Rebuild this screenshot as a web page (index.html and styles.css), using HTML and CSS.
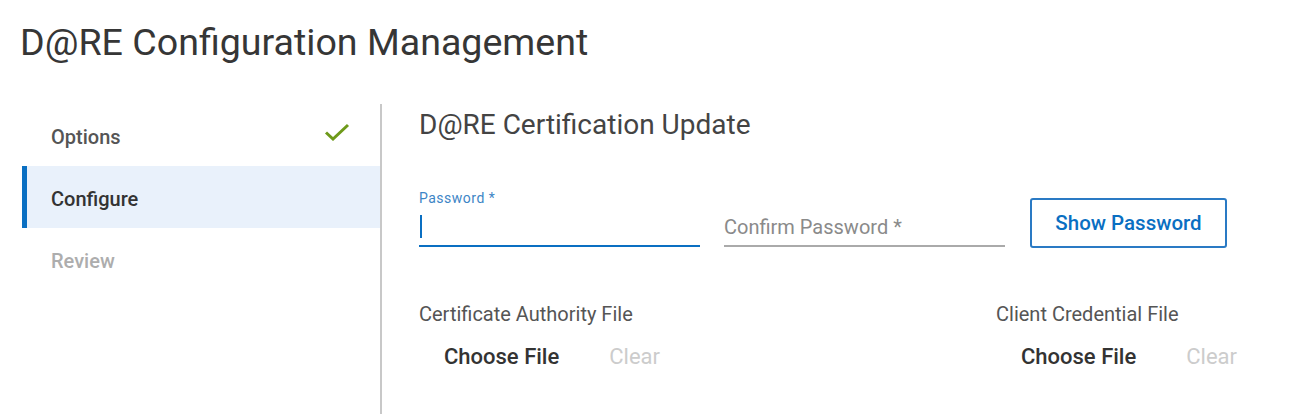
FILE: index.html
```html
<!DOCTYPE html>
<html lang="en">
<head>
<meta charset="utf-8">
<title>D@RE Configuration Management</title>
<link rel="stylesheet" href="styles.css">
</head>
<body>
  <h1 class="page-title">D@RE Configuration Management</h1>
  <div class="layout">
    <nav class="steps">
      <div class="step step-done">
        <span class="step-label">Options</span>
        <svg class="check" width="26" height="18" viewBox="0 0 26 18"><path d="M2 9.5 L9 16 L24 2" fill="none" stroke="#6e9a1a" stroke-width="3"/></svg>
      </div>
      <div class="step step-active"><span class="step-label">Configure</span></div>
      <div class="step step-disabled"><span class="step-label">Review</span></div>
    </nav>
    <main class="content">
      <h2 class="section-title">D@RE Certification Update</h2>
      <div class="pw-row">
        <div class="field field-focused">
          <label class="field-label">Password *</label>
          <div class="field-input"><span class="caret"></span></div>
        </div>
        <div class="field">
          <div class="field-input"><span class="placeholder">Confirm Password *</span></div>
        </div>
        <button class="btn-outline">Show Password</button>
      </div>
      <div class="files-row">
        <div class="file-group">
          <div class="file-label">Certificate Authority File</div>
          <div class="file-actions">
            <span class="choose">Choose File</span>
            <span class="clear">Clear</span>
          </div>
        </div>
        <div class="file-group">
          <div class="file-label">Client Credential File</div>
          <div class="file-actions">
            <span class="choose">Choose File</span>
            <span class="clear">Clear</span>
          </div>
        </div>
      </div>
    </main>
  </div>
</body>
</html>
```

FILE: styles.css
```css
html, body {
  margin: 0;
  padding: 0;
  background: #ffffff;
  font-family: Roboto, "Liberation Sans", sans-serif;
  height: 100%;
  overflow: hidden;
}

.page-title {
  margin: 0;
  padding: 19px 0 0 20px;
  height: 104px;
  box-sizing: border-box;
  font-size: 37.6px;
  font-weight: 400;
  color: #363636;
  line-height: 46px;
}

.layout {
  display: flex;
  height: 310px;
}

.steps {
  margin-left: 22px;
  width: 358px;
  border-right: 2px solid #c8c8c8;
}

.step {
  height: 62px;
  box-sizing: border-box;
  padding-top: 3px;
  display: flex;
  align-items: center;
  justify-content: space-between;
  border-left: 5px solid transparent;
  padding-left: 24px;
  padding-right: 30px;
  font-size: 20px;
  font-weight: 500;
  color: #555555;
}

.step-active {
  background: #e9f1fb;
  border-left-color: #0a6fc2;
  color: #333333;
}

.step-disabled {
  color: #adadad;
}

.check {
  display: block;
  margin-top: -10px;
}

.content {
  flex: 1;
  padding-left: 37px;
}

.section-title {
  margin: 0;
  padding-top: 4px;
  font-size: 28px;
  font-weight: 400;
  color: #444444;
  line-height: 34px;
}

.pw-row {
  display: flex;
  align-items: flex-end;
  margin-top: 48px;
}

.field {
  width: 281px;
  margin-right: 24px;
  margin-bottom: 1px;
}

.field-label {
  display: block;
  font-size: 14px;
  letter-spacing: 0.5px;
  color: #3d85c6;
  line-height: 16px;
  margin-bottom: 5px;
}

.field-input {
  height: 36px;
  box-sizing: border-box;
  border-bottom: 2px solid #aaaaaa;
  display: flex;
  align-items: flex-end;
  padding-bottom: 6px;
}

.field-focused .field-input {
  border-bottom-color: #0a6fc2;
}

.caret {
  width: 2px;
  height: 23px;
  background: #0a6fc2;
  margin-left: 1px;
  margin-bottom: 1px;
}

.placeholder {
  font-size: 20px;
  line-height: 24px;
  color: #8a8a8a;
}

.btn-outline {
  width: 197px;
  height: 50px;
  border: 2px solid #2a7ac4;
  border-radius: 3px;
  background: #ffffff;
  color: #0a6fc2;
  font-family: Roboto, "Liberation Sans", sans-serif;
  font-size: 20.5px;
  font-weight: 500;
  padding: 0;
  margin-left: 1px;
}

.files-row {
  display: grid;
  grid-template-columns: 577px 1fr;
  margin-top: 54px;
}

.file-label {
  font-size: 20px;
  color: #555555;
  line-height: 24px;
}

.file-actions {
  display: flex;
  gap: 50px;
  padding-left: 25px;
  margin-top: 18px;
  font-size: 22px;
  font-weight: 500;
  line-height: 26px;
}

.choose {
  color: #333333;
}

.clear {
  color: #cccccc;
  font-weight: 400;
}
```
